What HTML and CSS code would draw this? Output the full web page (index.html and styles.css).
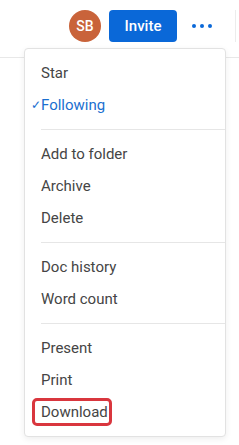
FILE: index.html
```html
<!DOCTYPE html>
<html lang="en">
<head>
<meta charset="utf-8">
<title>Doc menu</title>
<link rel="stylesheet" href="styles.css">
</head>
<body>
<header class="topbar">
  <div class="avatar">SB</div>
  <button class="invite">Invite</button>
  <button class="more" aria-label="More">
    <span class="dot"></span><span class="dot"></span><span class="dot"></span>
  </button>
  <div class="vsep"></div>
</header>
<div class="menu">
  <div class="item">Star</div>
  <div class="item selected"><span class="check">✓</span>Following</div>
  <div class="divider"></div>
  <div class="item">Add to folder</div>
  <div class="item">Archive</div>
  <div class="item">Delete</div>
  <div class="divider"></div>
  <div class="item">Doc history</div>
  <div class="item">Word count</div>
  <div class="divider"></div>
  <div class="item">Present</div>
  <div class="item">Print</div>
  <div class="item"><span class="highlight">Download</span></div>
</div>
</body>
</html>
```

FILE: styles.css
```css
* { box-sizing: border-box; }
html, body { margin: 0; padding: 0; background: #ffffff; }
body {
  font-family: Roboto, "Liberation Sans", Arial, sans-serif;
  color: #454545;
  width: 239px;
  height: 445px;
  position: relative;
  overflow: hidden;
}
.topbar {
  height: 58px;
  border-bottom: 1px solid #e8e8e8;
  display: flex;
  align-items: flex-start;
  padding: 10px 0 0 69px;
}
.avatar {
  width: 32px;
  height: 32px;
  border-radius: 50%;
  background: #c9633a;
  color: #ffffff;
  font-size: 14px;
  font-weight: 500;
  display: flex;
  align-items: center;
  justify-content: center;
  letter-spacing: 0.2px;
}
.invite {
  margin-left: 8px;
  width: 68px;
  height: 32px;
  border: none;
  border-radius: 4px;
  background: #0a68d8;
  color: #ffffff;
  font-family: inherit;
  font-size: 15px;
  font-weight: 500;
  padding: 0;
}
.more {
  margin-left: 15px;
  width: 20px;
  height: 32px;
  border: none;
  background: transparent;
  padding: 0;
  display: flex;
  align-items: center;
  justify-content: space-between;
}
.dot {
  width: 4px;
  height: 4px;
  border-radius: 50%;
  background: #0a68d8;
}
.vsep {
  margin-left: 23px;
  width: 1px;
  height: 32px;
  background: #ececec;
}
.menu {
  position: absolute;
  left: 24px;
  top: 48px;
  width: 202px;
  padding: 8px 0;
  background: #ffffff;
  border: 1px solid #e2e2e2;
  border-radius: 4px;
  box-shadow: 0 2px 6px rgba(0, 0, 0, 0.07);
}
.item {
  position: relative;
  height: 32px;
  padding-left: 16px;
  font-size: 15px;
  line-height: 32px;
  color: #454545;
}
.item.selected { color: #1a6fd0; }
.check {
  position: absolute;
  left: 6px;
  top: 0;
  font-size: 12px;
}
.divider {
  height: 1px;
  background: #e6e6e6;
  margin: 8px 0 8px 16px;
}
.highlight {
  position: relative;
  display: inline-block;
  line-height: 20px;
}
.highlight::after {
  content: "";
  position: absolute;
  left: -9px;
  right: -4px;
  top: -4px;
  bottom: -4px;
  border: 3px solid #d9363e;
  border-radius: 5px;
}
```
